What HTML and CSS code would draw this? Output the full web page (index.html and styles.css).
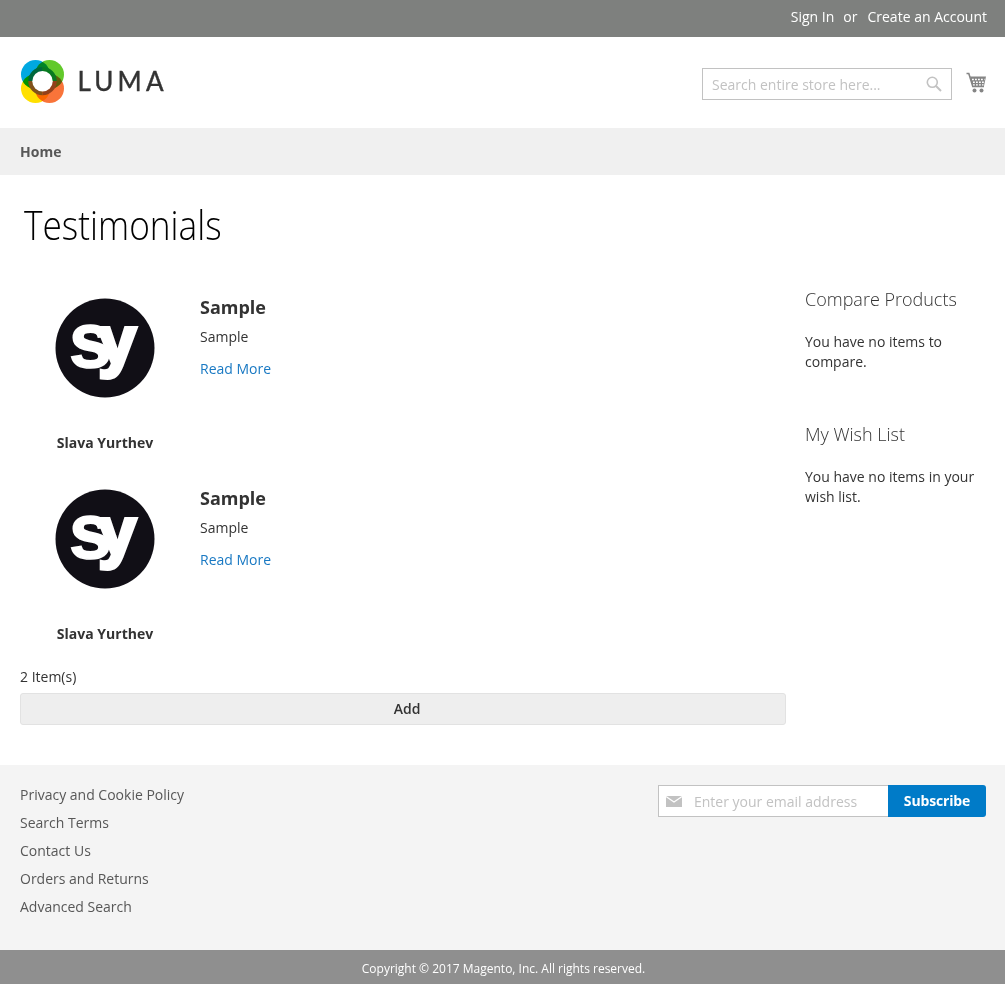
FILE: index.html
```html
<!DOCTYPE html>
<html lang="en">
<head>
<meta charset="utf-8">
<title>Testimonials</title>
<link rel="stylesheet" href="styles.css">
</head>
<body>
<div class="panel"><a>Sign In</a><span class="or">or</span><a>Create an Account</a></div>
<header class="header">
  <svg class="logo" width="146" height="46" viewBox="0 0 146 46">
    <g class="rings">
      <circle cx="15.500" cy="15.500" r="14.500" fill="#00a8e1"/>
      <circle cx="29.500" cy="15.500" r="14.500" fill="#62c92b"/>
      <circle cx="15.500" cy="29.500" r="14.500" fill="#ffe000"/>
      <circle cx="29.500" cy="29.500" r="14.500" fill="#f9743a"/>
    </g>
    <g fill="none" stroke-width="4.500">
      <path stroke="#00683c" d="M10.500 22a12 12 0 0 1 12-11.800"/>
      <path stroke="#087a20" d="M22.500 10.200a12 12 0 0 1 12 11.800"/>
      <path stroke="#93401b" d="M34.500 22a12 12 0 0 1-12 12"/>
      <path stroke="#80511a" d="M22.500 34a12 12 0 0 1-12-12"/>
    </g>
    <circle cx="22.500" cy="22.300" r="10.200" fill="#fff"/>
    <text class="wordmark" x="57.500" y="32" textLength="86">LUMA</text>
  </svg>
  <div class="tools">
    <div class="search"><span>Search entire store here...</span>
      <svg width="16" height="16" viewBox="0 0 16 16"><circle cx="6.300" cy="6.300" r="5" fill="none" stroke="#c2c2c2" stroke-width="1.600"/><path d="M10 10l5 5" stroke="#c2c2c2" stroke-width="2"/></svg>
    </div>
    <svg class="cart" width="21" height="21" viewBox="0 0 21 21"><path fill="none" d="M.5 1.500h2.300l4 13H18"/><path class="fill" d="M4 4.500h16l-2 9.500H6.500z"/><path class="grid" d="M6 7.500h12.500M7 10.300h11M7 12.900h10.500"/><circle cx="8.500" cy="18.500" r="2"/><circle cx="15.500" cy="18.500" r="2"/></svg>
  </div>
</header>
<nav class="nav"><a>Home</a></nav>
<div class="page">
  <h1 class="title">Testimonials</h1>
  <div class="columns">
    <main class="main">
      <article class="item">
        <div class="person">
          <svg class="avatar" width="100" height="100" viewBox="0 0 100 100"><circle cx="50" cy="50" r="49.500"/><text x="14" y="69">s<tspan class="tail" dx="-13.500" dy="-3">y</tspan></text></svg>
          <strong>Slava Yurthev</strong>
        </div>
        <div class="quote"><h2>Sample</h2><p>Sample</p><a>Read More</a></div>
      </article>
      <article class="item">
        <div class="person">
          <svg class="avatar" width="100" height="100" viewBox="0 0 100 100"><circle cx="50" cy="50" r="49.500"/><text x="14" y="69">s<tspan class="tail" dx="-13.500" dy="-3">y</tspan></text></svg>
          <strong>Slava Yurthev</strong>
        </div>
        <div class="quote"><h2>Sample</h2><p>Sample</p><a>Read More</a></div>
      </article>
      <p class="count">2 Item(s)</p>
      <button class="add">Add</button>
    </main>
    <aside class="side">
      <section><h3>Compare Products</h3><p>You have no items to compare.</p></section>
      <section><h3>My Wish List</h3><p>You have no items in your wish list.</p></section>
    </aside>
  </div>
</div>
<footer class="footer">
  <ul class="links"><li>Privacy and Cookie Policy</li><li>Search Terms</li><li>Contact Us</li><li>Orders and Returns</li><li>Advanced Search</li></ul>
  <div class="newsletter">
    <div class="email"><svg width="16" height="11" viewBox="0 0 16 11"><path fill="#c2c2c2" d="M0 0h16v11H0z"/><path fill="none" stroke="#fff" stroke-width="1.200" d="M0 .5l8 5.500 8-5.500"/></svg><span>Enter your email address</span></div>
    <button class="subscribe">Subscribe</button>
  </div>
</footer>
<div class="copyright">Copyright © 2017 Magento, Inc. All rights reserved.</div>
</body>
</html>
```

FILE: styles.css
```css
* { box-sizing: border-box; }
body { margin: 0; background: #fff; color: #333; font: 14px/20px "Open Sans", "Noto Sans", sans-serif; }
h1, h2, h3, p, ul { margin: 0; padding: 0; }
.panel { height: 37px; background: #7e807e; color: #fff; display: flex; justify-content: flex-end; padding: 7px 18px 0 0; }
.or { margin: 0 10px 0 9px; }
.header { height: 91px; display: flex; justify-content: space-between; align-items: flex-start; padding: 22px 18px 0 20px; }
.rings { isolation: isolate; }
.rings circle { mix-blend-mode: multiply; }
.wordmark { font: 26px Lato, sans-serif; fill: #333; stroke: #333; stroke-width: .4; }
.tools { display: flex; gap: 14px; padding-top: 9px; }
.search { width: 250px; height: 32px; border: 1px solid #c2c2c2; padding: 0 9px; display: flex; align-items: center; justify-content: space-between; color: #c2c2c2; }
.search span, .email span { padding-top: 2px; }
.cart { margin-top: 4px; fill: #858585; stroke: #858585; stroke-width: 1.6; }
.cart circle, .cart .fill { stroke: none; }
.cart .grid { stroke: #fff; stroke-width: 1.4; stroke-dasharray: 1.8 1.2; fill: none; }
.nav { height: 47px; background: #f0f0f0; padding: 14px 20px; color: #575757; font-weight: 700; }
.page { height: 590px; padding: 28px 20px 0; }
.title { font-size: 40px; line-height: 44px; font-weight: 300; color: #000; padding-left: 4px; transform: scaleX(.881); transform-origin: 4px 0; }
.columns { display: flex; justify-content: space-between; padding-top: 41px; }
.main { width: 766px; }
.item { height: 191px; display: flex; padding-top: 10px; }
.person { width: 170px; display: flex; flex-direction: column; align-items: center; gap: 35px; }
.avatar { fill: #110f16; }
.avatar text { fill: #fff; stroke: #fff; stroke-width: 1.6; font: bold 77px "Liberation Sans", sans-serif; }
.avatar .tail { font-size: 68px; stroke-width: 4; }
.quote { padding-left: 10px; }
.quote h2 { font-size: 18px; line-height: 18px; }
.quote p { margin: 11px 0 12px; }
.quote a { color: #1979c3; }
.count { margin-top: -3px; line-height: 20px; }
.add { display: block; width: 100%; height: 32px; margin-top: 6px; border: 1px solid #e2e2e2; border-radius: 3px; background: #eee; color: #333; font: 600 14px/16px "Open Sans", sans-serif; padding: 0 0 0 8px; }
.side { width: 180px; padding-top: 1px; }
.side section { height: 135px; }
.side h3 { font-size: 18px; line-height: 20px; font-weight: 300; margin-bottom: 23px; }
.footer { height: 185px; background: #f4f4f4; padding: 20px 19px 0 20px; display: flex; justify-content: space-between; color: #575757; }
.links { list-style: none; }
.links li { margin-bottom: 8px; }
.newsletter { display: flex; height: 32px; }
.email { width: 230px; border: 1px solid #c2c2c2; border-right: 0; background: #fff; padding-left: 7px; display: flex; align-items: center; gap: 12px; color: #c2c2c2; }
.subscribe { width: 98px; border: 0; border-radius: 0 3px 3px 0; background: #007bc8; color: #fff; font: 700 14px/16px "Open Sans", sans-serif; letter-spacing: -.15px; padding: 0; }
.copyright { height: 34px; background: #8f8f8f; color: #fff; text-align: center; font-size: 12px; line-height: 38px; padding-left: 2px; }
```
